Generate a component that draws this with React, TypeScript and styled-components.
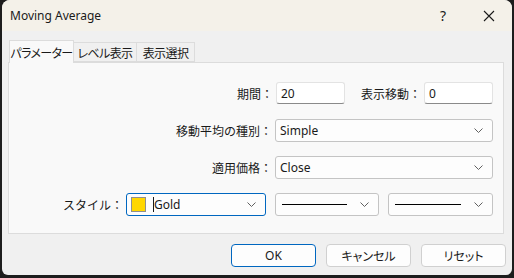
import React from "react";
import styled, { createGlobalStyle } from "styled-components";

const GlobalStyle = createGlobalStyle`
  html, body {
    margin: 0;
    padding: 0;
    background: #1d1d1d;
  }
  body {
    width: 514px;
    height: 278px;
    overflow: hidden;
    font-family: "Noto Sans", "Noto Sans CJK JP", sans-serif;
  }
`;

// small chevron used by every combo box
const Chevron = () => (
  <svg width="9" height="5" viewBox="0 0 9 5">
    <polyline points="0.5,0.5 4.5,4.5 8.5,0.5" fill="none" stroke="#606060" strokeWidth="1" />
  </svg>
);

export default function App() {
  return (
    <>
      <GlobalStyle />
      <Window>
        <TitleBar>
          <Title>Moving Average</Title>
          <TitleButtons>
            <HelpButton>?</HelpButton>
            <CloseButton>
              <svg width="12" height="12" viewBox="0 0 12 12">
                <path d="M1 1 L11 11 M11 1 L1 11" stroke="#1a1a1a" strokeWidth="1.1" />
              </svg>
            </CloseButton>
          </TitleButtons>
        </TitleBar>
        <Body>
          <Tabs>
            <Tab $active $width={65}>パラメーター</Tab>
            <Tab $width={63}>レベル表示</Tab>
            <Tab $width={58}>表示選択</Tab>
          </Tabs>
          <Panel>
            <Row>
              <Label>期間：</Label>
              <TextInput $width={69}>20</TextInput>
              <Label $ml={16}>表示移動：</Label>
              <TextInput $width={69}>0</TextInput>
            </Row>
            <Row>
              <Label>移動平均の種別：</Label>
              <Combo $width={218}>
                <ComboText>Simple</ComboText>
                <Chevron />
              </Combo>
            </Row>
            <Row>
              <Label>適用価格：</Label>
              <Combo $width={218}>
                <ComboText>Close</ComboText>
                <Chevron />
              </Combo>
            </Row>
            <Row>
              <Label>スタイル：</Label>
              <Combo $width={140} $focused>
                <Swatch />
                <Caret />
                <ComboText>Gold</ComboText>
                <Chevron />
              </Combo>
              <Combo $width={104} $ml={9}>
                <LineSample />
                <Chevron />
              </Combo>
              <Combo $width={105} $ml={9}>
                <LineSample />
                <Chevron />
              </Combo>
            </Row>
          </Panel>
          <Footer>
            <Button $primary>OK</Button>
            <Button>キャンセル</Button>
            <Button>リセット</Button>
          </Footer>
        </Body>
      </Window>
    </>
  );
}

const Window = styled.div`
  margin-left: 2px;
  width: 510px;
  height: 275px;
  border-radius: 8px 8px 6px 6px;
  overflow: hidden;
  background: #f0f0f0;
  display: flex;
  flex-direction: column;
`;

const TitleBar = styled.div`
  height: 31px;
  flex: none;
  background: #f4f1e9;
  display: flex;
  align-items: center;
  justify-content: space-between;
  padding-left: 8px;
`;

const Title = styled.div`
  font-family: "Noto Sans", sans-serif;
  font-size: 12px;
  color: #1a1a1a;
`;

const TitleButtons = styled.div`
  display: flex;
  align-items: center;
  height: 100%;
`;

const HelpButton = styled.div`
  width: 46px;
  text-align: center;
  font-size: 14px;
  color: #1a1a1a;
`;

const CloseButton = styled.div`
  width: 46px;
  height: 100%;
  display: flex;
  align-items: center;
  justify-content: center;
`;

const Body = styled.div`
  flex: 1;
  padding: 9px 6px 0 6px;
  display: flex;
  flex-direction: column;
`;

const Tabs = styled.div`
  display: flex;
  align-items: flex-end;
  height: 22px;
  padding-left: 1px;
  position: relative;
  z-index: 1;
`;

const Tab = styled.div<{ $active?: boolean; $width: number }>`
  width: ${(p) => p.$width}px;
  height: ${(p) => (p.$active ? "23px" : "20px")};
  box-sizing: border-box;
  margin-bottom: ${(p) => (p.$active ? "-1px" : "0")};
  display: flex;
  align-items: center;
  justify-content: center;
  white-space: nowrap;
  font-family: "Noto Sans CJK JP", sans-serif;
  font-feature-settings: "palt";
  letter-spacing: -0.6px;
  font-size: 12px;
  color: #1a1a1a;
  background: ${(p) => (p.$active ? "#f9f9f9" : "#f0f0f0")};
  border: 1px solid #dcdcdc;
  border-bottom: ${(p) => (p.$active ? "none" : "1px solid #dcdcdc")};
  & + & {
    border-left: none;
  }
`;

const Panel = styled.div`
  width: 496px;
  height: 172px;
  box-sizing: border-box;
  background: #f9f9f9;
  border: 1px solid #dcdcdc;
  padding: 19px 10px 0 0;
  display: flex;
  flex-direction: column;
  gap: 15px;
`;

const Row = styled.div`
  display: flex;
  justify-content: flex-end;
  align-items: center;
  height: 22px;
`;

const Label = styled.div<{ $ml?: number }>`
  font-family: "Noto Sans CJK JP", sans-serif;
  font-size: 12px;
  color: #1a1a1a;
  margin-left: ${(p) => p.$ml ?? 0}px;
  margin-right: 3px;
  white-space: nowrap;
`;

const TextInput = styled.div<{ $width: number }>`
  width: ${(p) => p.$width}px;
  height: 22px;
  box-sizing: border-box;
  background: #ffffff;
  border: 1px solid #e3e3e3;
  border-bottom-color: #8a8a8a;
  border-radius: 3px;
  padding-left: 4px;
  display: flex;
  align-items: center;
  font-size: 12px;
  color: #1a1a1a;
`;

const Combo = styled.div<{ $width: number; $ml?: number; $focused?: boolean }>`
  width: ${(p) => p.$width}px;
  height: 23px;
  margin-left: ${(p) => p.$ml ?? 0}px;
  box-sizing: border-box;
  background: #fdfdfd;
  border: 1px solid ${(p) => (p.$focused ? "#0067c0" : "#c4c4c4")};
  border-radius: 3px;
  padding: 0 9px 0 4px;
  display: flex;
  align-items: center;
  font-size: 12px;
  color: #1a1a1a;
`;

const ComboText = styled.span`
  flex: 1;
  font-family: "Noto Sans", sans-serif;
  font-size: 12px;
`;

const Swatch = styled.div`
  width: 13px;
  height: 13px;
  flex: none;
  background: #ffd700;
  border: 1px solid #8f8f8f;
  margin-right: 7px;
`;

const Caret = styled.div`
  width: 1px;
  height: 15px;
  background: #1a1a1a;
  flex: none;
`;

const LineSample = styled.div`
  flex: 1;
  height: 1px;
  background: #000000;
  margin: 0 13px 0 2px;
`;

const Footer = styled.div`
  display: flex;
  justify-content: flex-end;
  gap: 10px;
  padding: 10px 0 0 0;
`;

const Button = styled.div<{ $primary?: boolean }>`
  width: 85px;
  height: 23px;
  box-sizing: border-box;
  background: #fdfdfd;
  border: 1px solid ${(p) => (p.$primary ? "#0067c0" : "#d0d0d0")};
  border-radius: 4px;
  display: flex;
  align-items: center;
  justify-content: center;
  font-family: "Noto Sans", "Noto Sans CJK JP", sans-serif;
  font-feature-settings: "palt";
  font-size: 12px;
  color: #1a1a1a;
`;
